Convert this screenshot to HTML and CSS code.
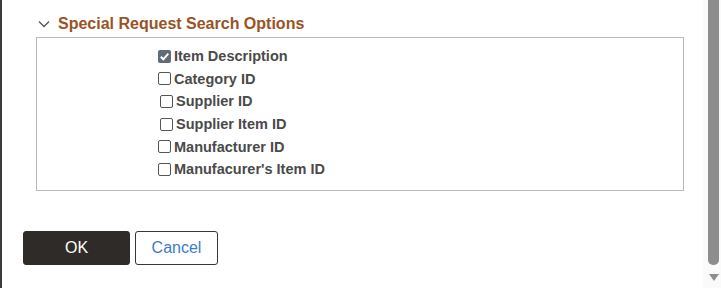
FILE: index.html
```html
<!DOCTYPE html>
<html>
<head>
<meta charset="utf-8">
<link rel="stylesheet" href="styles.css">
</head>
<body>
<div class="page">
  <main class="main">
    <div class="section-head">
      <svg class="chev" width="12" height="8" viewBox="0 0 12 8"><path d="M1 1.5 L6 6.5 L11 1.5" fill="none" stroke="#555" stroke-width="1.3"/></svg>
      <span class="section-title">Special Request Search Options</span>
    </div>
    <div class="fieldbox">
      <ul class="options">
        <li class="opt"><span class="cb checked"><svg width="13" height="13" viewBox="0 0 13 13"><path d="M2.8 6.8 L5.3 9.3 L10.3 3.6" fill="none" stroke="#fff" stroke-width="2"/></svg></span><span>Item Description</span></li>
        <li class="opt"><span class="cb"></span><span>Category ID</span></li>
        <li class="opt shift"><span class="cb"></span><span>Supplier ID</span></li>
        <li class="opt shift"><span class="cb"></span><span>Supplier Item ID</span></li>
        <li class="opt"><span class="cb"></span><span>Manufacturer ID</span></li>
        <li class="opt"><span class="cb"></span><span>Manufacurer's Item ID</span></li>
      </ul>
    </div>
    <div class="buttons">
      <button class="btn btn-primary">OK</button>
      <button class="btn btn-secondary">Cancel</button>
    </div>
  </main>
  <div class="scrollbar">
    <div class="thumb"></div>
    <div class="arrow"></div>
  </div>
</div>
</body>
</html>
```
FILE: styles.css
```css
html, body {
  margin: 0;
  padding: 0;
  background: #fff;
  font-family: "Liberation Sans", Arial, sans-serif;
}
.page {
  display: flex;
  height: 288px;
  overflow: hidden;
}
.main {
  flex: 1;
  border-left: 2px solid #3e3a36;
  padding: 15px 0 0 34px;
  box-sizing: border-box;
}
.section-head {
  display: flex;
  align-items: center;
  height: 18px;
  padding-left: 2px;
}
.chev {
  margin-right: 8px;
}
.section-title {
  font-weight: bold;
  font-size: 16px;
  color: #9a5325;
}
.fieldbox {
  margin-top: 4px;
  width: 648px;
  height: 154px;
  border: 1px solid #bbb8b5;
  box-sizing: border-box;
  padding: 7px 0 0 121px;
}
.options {
  list-style: none;
  margin: 0;
  padding: 0;
}
.opt {
  display: flex;
  align-items: center;
  height: 22.6px;
  font-size: 14.5px;
  font-weight: bold;
  color: #4a4a4a;
}
.opt.shift {
  padding-left: 2px;
}
.cb {
  width: 11px;
  height: 11px;
  border: 1px solid #555;
  border-radius: 2px;
  margin-right: 3px;
  display: inline-flex;
  flex: none;
  background: #fff;
}
.cb.checked {
  width: 13px;
  height: 13px;
  border: none;
  background: #5f6b76;
}
.buttons {
  display: flex;
  gap: 5px;
  margin-top: 40px;
  margin-left: -13px;
}
.btn {
  height: 34px;
  border-radius: 3px;
  font-family: "Liberation Sans", Arial, sans-serif;
  font-size: 16px;
  cursor: pointer;
  box-sizing: border-box;
}
.btn-primary {
  width: 107px;
  background: #2f2b28;
  color: #fff;
  border: 1px solid #2f2b28;
}
.btn-secondary {
  width: 83px;
  background: #fff;
  color: #3d7bc4;
  border: 1px solid #3a3633;
}
.scrollbar {
  width: 18px;
  flex: none;
  background: #fafafa;
  display: flex;
  flex-direction: column;
  align-items: center;
}
.thumb {
  width: 11px;
  height: 265px;
  background: #8d8d8d;
  border-radius: 0 0 5px 5px;
  margin-left: 3px;
}
.arrow {
  margin-top: 9px;
  margin-left: 3px;
  width: 0;
  height: 0;
  border-left: 5px solid transparent;
  border-right: 5px solid transparent;
  border-top: 7px solid #8d8d8d;
}
```
